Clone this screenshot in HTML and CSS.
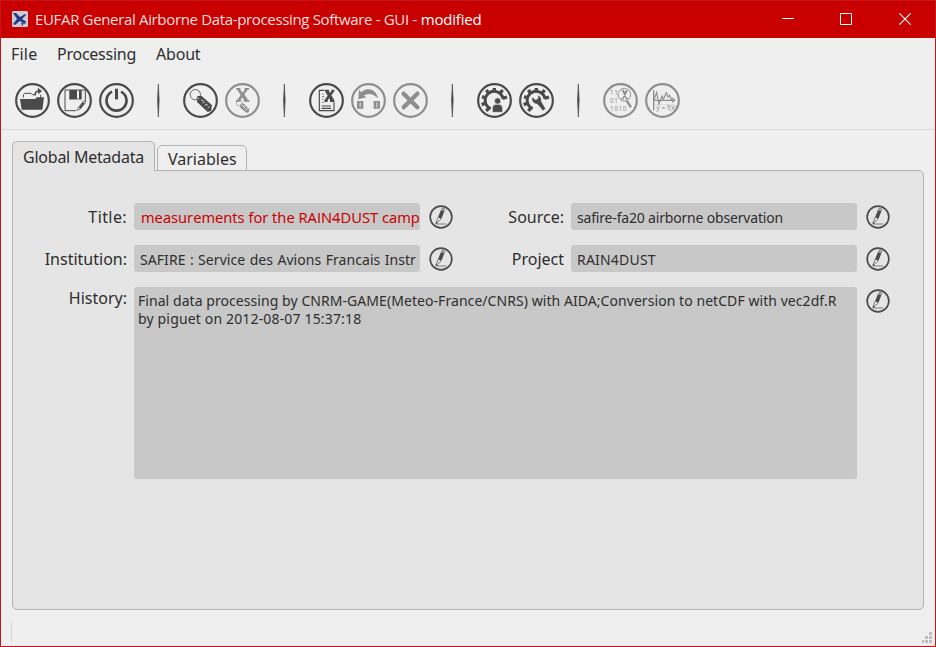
FILE: index.html
```html
<!DOCTYPE html>
<html lang="en">
<head>
<meta charset="utf-8">
<title>EUFAR General Airborne Data-processing Software</title>
<link rel="stylesheet" href="styles.css">
</head>
<body>
<svg class="defs" aria-hidden="true">
  <symbol id="pen" viewBox="0 0 72 72">
    <circle cx="36" cy="36" r="32.5" fill="none" stroke="#4a4a4a" stroke-width="5"/>
    <path d="M27 37 36 15 46 19 37 42Z" fill="#4a4a4a"/>
    <path d="M38 13 40 9 48 13 46 17ZM27 37 21 55 36 43M22 57H52" fill="none" stroke="#666" stroke-width="2.5"/>
    <path d="M20 58 21 50 27 54Z" fill="#4a4a4a"/>
  </symbol>
  <symbol id="gear" viewBox="0 0 105 105">
    <path d="M41 77A27 27 0 1 1 78 47" fill="none" stroke="currentColor" stroke-width="9"/>
    <path d="M52 26V15M36 32 28 21M27 45 15 41M27 60 14 65M36 74 28 84M68 32 77 21M77 46 90 42" fill="none" stroke="currentColor" stroke-width="10"/>
  </symbol>
</svg>
<div class="window">
  <header class="titlebar">
    <svg class="app" viewBox="0 0 16 16"><rect width="16" height="16" rx="1.5" fill="#c9ccd3"/><path d="M1 2 4 2 8 6 13 3 14 4 10 8 13 10 14 13 11 12 8 10 3 14 1 13 5 8Z" fill="#253b87"/><path d="M9 13 14 10M10 15 12 10" stroke="#253b87"/></svg>
    <h1><span class="name">EUFAR General Airborne Data-processing Software - GUI -</span> <span class="mod">modified</span></h1>
    <div class="controls">
      <svg viewBox="0 0 12 12"><path d="M0 5.5H12" stroke="#fff"/></svg>
      <svg viewBox="0 0 12 12"><path d="M.5.5H11.5V11.5H.5Z" fill="none" stroke="#fff"/></svg>
      <svg viewBox="0 0 12 12"><path d="M.3.3 11.7 11.7M11.7.3.3 11.7" stroke="#fff" stroke-width="1.1"/></svg>
    </div>
  </header>
  <nav class="menu"><span class="m-file">File</span><span class="m-proc">Processing</span><span class="m-about">About</span></nav>
  <div class="toolbar">
    <svg viewBox="0 0 105 105"><circle class="ring" cx="52.5" cy="52.5" r="49"/><path d="M15 48H60L66 43H87L82 80H20Z" fill="currentColor"/><path d="M25 44V35L29 31H48L52 35H61M77 44V35" fill="none" stroke="currentColor" stroke-width="3"/><path d="M60 37Q61 25 70 24" fill="none" stroke="currentColor" stroke-width="5"/><path d="M68 14 81 24 70 34Z" fill="currentColor"/></svg>
    <svg viewBox="0 0 105 105"><circle class="ring" cx="52.5" cy="52.5" r="49"/><path d="M58 83H24V21H85V57" fill="none" stroke="currentColor" stroke-width="3"/><path d="M37 21H60V49H37ZM66 21H73V49H66Z" fill="currentColor"/><path d="M37 48H73V21M61 82 63 74 80 53 86 58 69 79Z" fill="none" stroke="currentColor" stroke-width="2"/><path d="M65 74 78 57 84 61 70 78Z" fill="currentColor"/></svg>
    <svg viewBox="0 0 105 105"><circle class="ring" cx="52.5" cy="52.5" r="49"/><path d="M39 26A30 30 0 1 0 66 26" fill="none" stroke="currentColor" stroke-width="8"/><path d="M52.5 17V49" stroke="currentColor" stroke-width="9"/></svg>
    <svg viewBox="0 0 105 105"><path class="sep" d="M52 3Q57 52 52 102Q47 52 52 3Z"/></svg>
    <svg viewBox="0 0 105 105"><circle class="ring" cx="52.5" cy="52.5" r="49"/><circle cx="37" cy="35" r="15.5" fill="none" stroke="currentColor" stroke-width="2.5"/><path d="M41 44 44 39 56 39 87 67 84 84 74 87 43 58Z" fill="currentColor"/><path d="M43 44 49 48M54 51 62 54M59 60 65 57M65 68 71 63 73 68M74 76 80 70" stroke="#efefef" stroke-width="2.5" fill="none"/></svg>
    <svg class="off" viewBox="0 0 105 105"><circle class="ring" cx="52.5" cy="52.5" r="49"/><path d="M34 15H46V20L53 29 59 20V15H72V20H68L58 34 69 51H73V56H57V51L52 43 46 51V56H33V51H37L47 36 37 20H34Z" fill="currentColor"/><circle cx="43" cy="60" r="9" fill="none" stroke="currentColor" stroke-width="2"/><path d="M45 66 51 61 57 63 73 79 71 88 64 89 46 74Z" fill="currentColor"/><path d="M50 66 57 70M55 75 62 71M61 81 68 77" stroke="#efefef" stroke-width="3"/></svg>
    <svg viewBox="0 0 105 105"><path class="sep" d="M52 3Q57 52 52 102Q47 52 52 3Z"/></svg>
    <svg viewBox="0 0 105 105"><circle class="ring" cx="52.5" cy="52.5" r="49"/><path d="M46 22H31V83H75V58M38 69H66M38 76H66" fill="none" stroke="currentColor" stroke-width="3.5"/><path d="M39 33H44M39 41H46M39 49H43M39 58H44" stroke="currentColor" stroke-width="2"/><path d="M47 20H60V24L63 30 67 24V20H76V25L67 37 76 52V57H63V51L60 46 56 52V57H46V52L56 38 48 25Z" fill="currentColor"/></svg>
    <svg class="off" viewBox="0 0 105 105"><circle class="ring" cx="52.5" cy="52.5" r="49"/><path d="M24 20 22 49 47 43 38 38Q57 25 82 46 73 15 47 19 38 21 31 28Z" fill="currentColor"/><path d="M18 54H37V77H18ZM68 54H87V77H68Z" fill="currentColor"/><path d="M27.5 58V73M77.5 58V73" stroke="#efefef" stroke-width="2.5"/></svg>
    <svg class="off" viewBox="0 0 105 105"><circle class="ring" cx="52.5" cy="52.5" r="49"/><path d="M32 32 73 73M73 32 32 73" stroke="currentColor" stroke-width="13" stroke-linecap="round"/></svg>
    <svg viewBox="0 0 105 105"><path class="sep" d="M52 3Q57 52 52 102Q47 52 52 3Z"/></svg>
    <svg viewBox="0 0 105 105"><circle class="ring" cx="52.5" cy="52.5" r="49"/><use href="#gear"/><circle cx="62" cy="54" r="9.5" fill="currentColor" stroke="#efefef" stroke-width="2"/><path d="M46 88V74Q48 64 57 64H67Q76 66 77 75V88Z" fill="currentColor" stroke="#efefef" stroke-width="2"/></svg>
    <svg viewBox="0 0 105 105"><circle class="ring" cx="52.5" cy="52.5" r="49"/><use href="#gear"/><path d="M41 43 50 50 57 46 56 36Q69 40 67 55L80 77 72 84 55 64Q40 62 38 47Z" fill="currentColor" stroke="#efefef" stroke-width="2"/></svg>
    <svg viewBox="0 0 105 105"><path class="sep" d="M52 3Q57 52 52 102Q47 52 52 3Z"/></svg>
    <svg class="off" viewBox="0 0 105 105"><circle class="ring" cx="52.5" cy="52.5" r="49"/><g class="bits"><text x="21" y="35">11</text><text x="21" y="59">01</text><text x="21" y="83">1010</text></g><circle cx="64" cy="35" r="19" fill="#efefef" stroke="currentColor" stroke-width="3"/><path d="M71 53 84 73" stroke="currentColor" stroke-width="7"/><path d="M56 23H61L65 31 70 23H73M54 47H60L72 23M60 24 70 47H75" fill="none" stroke="currentColor" stroke-width="4"/></svg>
    <svg class="off" viewBox="0 0 105 105"><circle class="ring" cx="52.5" cy="52.5" r="49"/><path d="M26 22V82" stroke="currentColor" stroke-width="4"/><path d="M25 52H88M81 45 89 52 81 58M27 50 35 29 42 63 51 39 55 49 64 29 69 42 74 37 80 52" fill="none" stroke="currentColor" stroke-width="3.5"/><path d="M31 65H89" stroke="currentColor" stroke-dasharray="3 2"/><text class="fx" x="34" y="82">y = f(x)</text></svg>
  </div>
  <main>
    <div class="tabs"><div class="tab active"><span class="t-global">Global Metadata</span></div><div class="tab"><span class="t-vars">Variables</span></div></div>
    <section class="panel">
      <label class="l-title">Title:</label><div class="field changed"><span>measurements for the RAIN4DUST camp</span></div><svg class="edit"><use href="#pen"/></svg>
      <label class="l-source">Source:</label><div class="field f-source"><span>safire-fa20 airborne observation</span></div><svg class="edit"><use href="#pen"/></svg>
      <label class="l-inst">Institution:</label><div class="field f-inst"><span>SAFIRE : Service des Avions Francais Instr</span></div><svg class="edit"><use href="#pen"/></svg>
      <label class="l-project">Project</label><div class="field f-project"><span>RAIN4DUST</span></div><svg class="edit"><use href="#pen"/></svg>
      <label class="l-history">History:</label><div class="area"><p class="h1">Final data processing by CNRM-GAME(Meteo-France/CNRS) with AIDA;Conversion to netCDF with vec2df.R</p><p class="h2">by piguet on 2012-08-07 15:37:18</p></div><svg class="edit"><use href="#pen"/></svg>
    </section>
  </main>
  <footer><i></i><svg class="grip" viewBox="0 0 10 11"><path d="M7 0H10V3H7ZM3 4H6V7H3ZM7 4H10V7H7ZM0 8H2V11H0ZM3 8H6V11H3ZM7 8H10V11H7Z" fill="#bdbdbd"/></svg></footer>
</div>
</body>
</html>
```
FILE: styles.css
```css
* { box-sizing: border-box; }
body { margin: 0; font-family: "Noto Sans", sans-serif; color: #2e2e2e; }
.defs { position: absolute; width: 0; height: 0; }
.window { width: 936px; height: 647px; border: 1px solid #c4161c; background: #efefef; display: flex; flex-direction: column; overflow: hidden; }
.titlebar { height: 37px; flex: none; background: #c80000; display: flex; align-items: center; padding: 0 24px 2px 11px; }
.app { width: 16px; height: 16px; margin-right: 7px; }
h1 { margin: 0; font: 15px/20px "Open Sans", sans-serif; color: #fff; white-space: pre; }
.name { color: #ffdede; letter-spacing: -.34px; }
.mod { letter-spacing: -.2px; }
.controls { margin-left: auto; display: flex; gap: 47px; }
.controls svg { width: 12px; height: 12px; }
.controls svg:first-child { margin-right: -1px; }
.menu { height: 34px; flex: none; display: flex; padding: 5px 0 0 10px; font-size: 16px; line-height: 23px; }
.m-file { width: 46px; letter-spacing: .2px; }
.m-proc { width: 99px; letter-spacing: -.25px; }
.m-about { letter-spacing: -.2px; }
.toolbar { height: 58px; flex: none; border-bottom: 1px solid #d9d9d9; padding: 11px 0 0 14px; display: flex; gap: 7px; color: #4a4a4a; }
.toolbar svg { width: 35px; height: 35px; flex: none; }
.ring { fill: none; stroke: currentColor; stroke-width: 6.5; }
.sep { fill: #4a4a4a; stroke: #4a4a4a; stroke-width: 2; }
.toolbar .off { color: #4a4a4a; opacity: .58; }
.bits { font: 19px "Noto Sans", sans-serif; letter-spacing: 2px; fill: currentColor; }
.fx { font: 20px "Noto Sans", sans-serif; fill: currentColor; }
main { flex: none; padding: 11px 11px 0 11px; }
.tabs { display: flex; align-items: flex-end; gap: 2px; height: 30px; position: relative; z-index: 1; margin-bottom: -1px; }
.tab { border: 1px solid #b4b4b4; border-radius: 5px 5px 0 0; background: #efefef; height: 26px; width: 90px; padding-left: 10px; font-size: 16px; line-height: 27px; white-space: nowrap; }
.tab.active { background: #e5e5e5; height: 30px; width: 143px; border-bottom: 0; line-height: 31px; letter-spacing: -.23px; }
.panel { height: 440px; border: 1px solid #b4b4b4; border-radius: 0 5px 5px 5px; background: #e5e5e5; display: grid; grid-template-columns: 113px 286px 24px 103px 286px 24px; grid-template-rows: 27px 27px 192px; row-gap: 15px; column-gap: 8px; padding-top: 32px; align-items: start; }
.panel label { font-size: 16px; line-height: 28px; text-align: right; white-space: nowrap; margin-right: -1px; }
.panel .l-title { letter-spacing: .4px; }
.panel .l-history { line-height: 23px; }
.field, .area { background: #c8c8c8; border-radius: 3px; font-size: 14px; overflow: hidden; white-space: nowrap; }
.field { height: 27px; line-height: 29px; padding: 0 0 0 6px; }
.field span { display: block; }
.field.changed { color: #c80000; font: 14.7px/29px "Open Sans", sans-serif; padding-left: 7px; -webkit-text-stroke: .1px #c80000; letter-spacing: .02px; }
.f-source { letter-spacing: -.18px; }
.f-inst { letter-spacing: .06px; word-spacing: .7px; }
.f-project { letter-spacing: .2px; }
.area { grid-column: 2 / 6; height: 192px; padding: 5px 4px; }
.area p { margin: 0; line-height: 18px; }
.h1 { letter-spacing: .06px; }
.h2 { letter-spacing: .16px; }
.edit { width: 24px; height: 24px; margin: 1.5px 0 0 .5px; }
footer { margin-top: auto; height: 25px; display: flex; justify-content: space-between; align-items: flex-start; padding: 0 3px 0 10px; }
footer i { width: 1px; height: 21px; background: #d5d5d5; }
.grip { width: 10px; height: 11px; margin-top: 11px; }
```
